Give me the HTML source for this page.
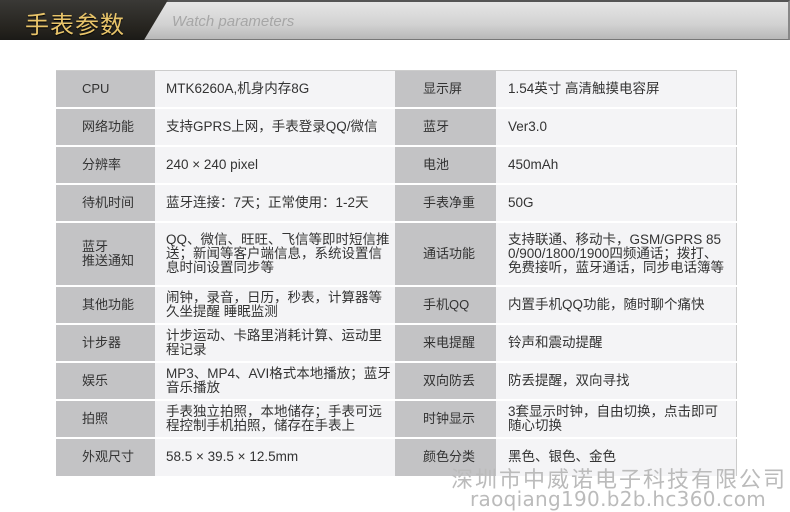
<!DOCTYPE html>
<html><head><meta charset="utf-8"><style>
*{margin:0;padding:0;box-sizing:border-box}
body{width:790px;height:512px;background:#fff;position:relative;overflow:hidden;font-family:"Liberation Sans","Noto Sans CJK SC",sans-serif;}
.hdr{position:absolute;left:0;top:0;width:790px;height:40px;background:linear-gradient(#e6e6e6,#d2d2d2 60%,#b8b8b8);border-top:2px solid #555;border-bottom:1px solid #777;border-right:2px solid #888}
.dark{position:absolute;left:0;top:0;width:168px;height:40px;background:linear-gradient(#3a3936,#26241f 70%,#1b1a17);clip-path:polygon(0 0,168px 0,144px 40px,0 40px)}
.t1{position:absolute;left:25px;top:5px;font-size:24px;color:#e8c46a;letter-spacing:1px;text-shadow:0 1px 1px #000}
.t2{position:absolute;left:172px;top:13px;font-size:15px;color:#a6a6a6;font-style:italic}
table{position:absolute;left:56px;top:70px;width:680px;border-collapse:collapse;font-size:13px;color:#333;table-layout:fixed}
td{border-top:2px solid #fff;line-height:14px;vertical-align:middle}
tr:first-child td{border-top:1px solid #ccc}
td.l{background:#c3c3c5;width:99px;padding-left:26px}
td.l2{background:#c3c3c5;width:101px;padding-left:28px}
td.v{background:#f4f4f6;width:240px;padding:0 3px 0 11px;font-size:13.5px;word-break:break-all}
td.v2{background:#f4f4f6;width:240px;padding:0 8px 0 12px;border-right:1px solid #ccc;font-size:13.5px;word-break:break-all}
.wm1{position:absolute;left:451px;top:462px;font-size:22px;color:#bbb;letter-spacing:2px;white-space:nowrap}
.wm2{position:absolute;left:470px;top:487px;font-size:20px;color:#bbb;white-space:nowrap;font-family:"DejaVu Sans","Liberation Sans",sans-serif;letter-spacing:0.3px}
</style></head><body>
<div class="hdr"></div><div class="dark"></div>
<div class="t1">手表参数</div><div class="t2">Watch parameters</div>
<table>
<tr style="height:37px"><td class="l">CPU</td><td class="v">MTK6260A,机身内存8G</td><td class="l2">显示屏</td><td class="v2">1.54英寸 高清触摸电容屏</td></tr>
<tr style="height:38px"><td class="l">网络功能</td><td class="v">支持GPRS上网，手表登录QQ/微信</td><td class="l2">蓝牙</td><td class="v2">Ver3.0</td></tr>
<tr style="height:38px"><td class="l">分辨率</td><td class="v">240 × 240 pixel</td><td class="l2">电池</td><td class="v2">450mAh</td></tr>
<tr style="height:38px"><td class="l">待机时间</td><td class="v">蓝牙连接：7天；正常使用：1-2天</td><td class="l2">手表净重</td><td class="v2">50G</td></tr>
<tr style="height:64px"><td class="l">蓝牙<br>推送通知</td><td class="v">QQ、微信、旺旺、飞信等即时短信推送；新闻等客户端信息，系统设置信息时间设置同步等</td><td class="l2">通话功能</td><td class="v2">支持联通、移动卡，GSM/GPRS 850/900/1800/1900四频通话；拨打、免费接听，蓝牙通话，同步电话簿等</td></tr>
<tr style="height:38px"><td class="l">其他功能</td><td class="v">闹钟，录音，日历，秒表，计算器等<br>久坐提醒 睡眠监测</td><td class="l2">手机QQ</td><td class="v2">内置手机QQ功能，随时聊个痛快</td></tr>
<tr style="height:38px"><td class="l">计步器</td><td class="v">计步运动、卡路里消耗计算、运动里程记录</td><td class="l2">来电提醒</td><td class="v2">铃声和震动提醒</td></tr>
<tr style="height:38px"><td class="l">娱乐</td><td class="v">MP3、MP4、AVI格式本地播放；蓝牙音乐播放</td><td class="l2">双向防丢</td><td class="v2">防丢提醒，双向寻找</td></tr>
<tr style="height:38px"><td class="l">拍照</td><td class="v">手表独立拍照，本地储存；手表可远程控制手机拍照，储存在手表上</td><td class="l2">时钟显示</td><td class="v2">3套显示时钟，自由切换，点击即可随心切换</td></tr>
<tr style="height:38px"><td class="l">外观尺寸</td><td class="v">58.5 × 39.5 × 12.5mm</td><td class="l2">颜色分类</td><td class="v2">黑色、银色、金色</td></tr>
</table>
<div class="wm1">深圳市中威诺电子科技有限公司</div>
<div class="wm2">raoqiang190.b2b.hc360.com</div>
</body></html>
